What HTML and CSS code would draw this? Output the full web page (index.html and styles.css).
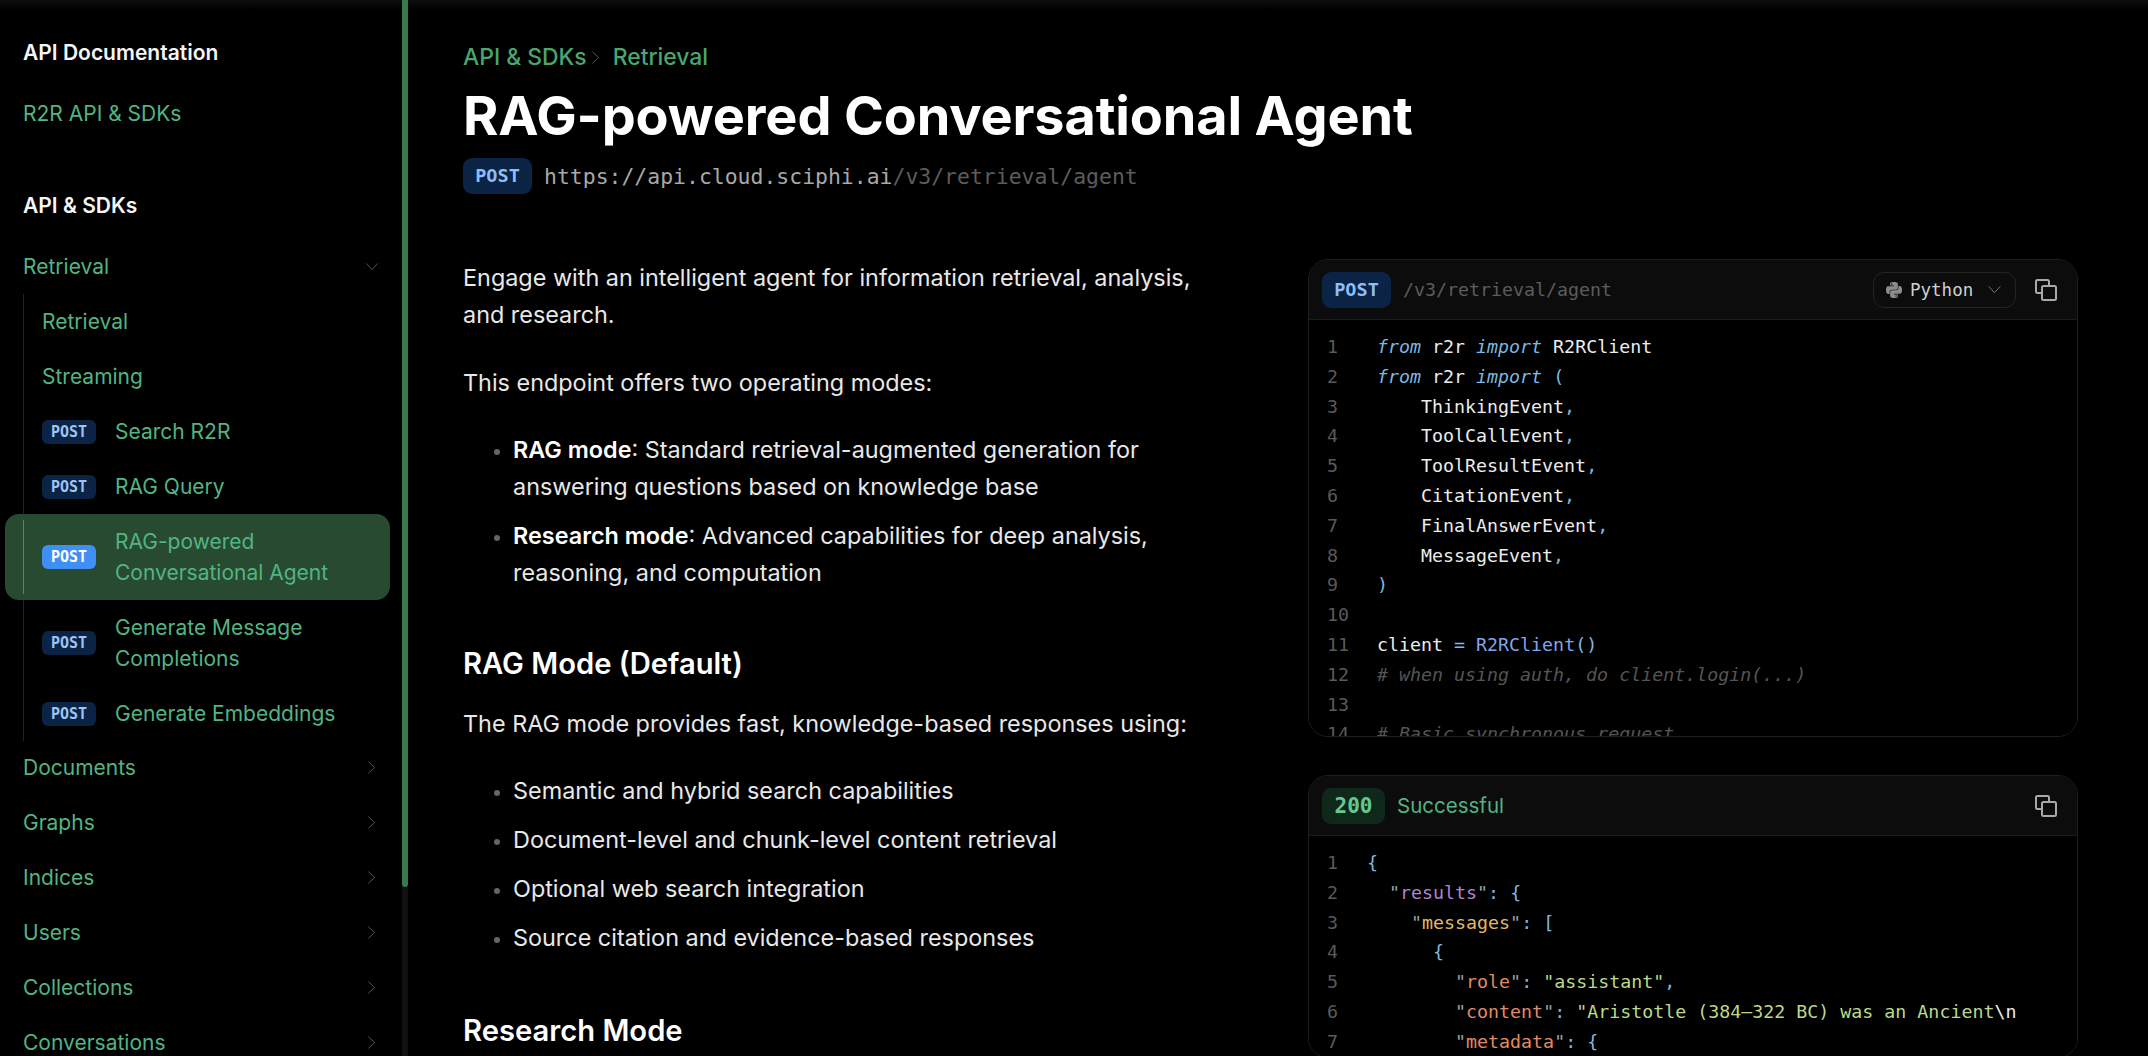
FILE: index.html
```html
<!DOCTYPE html>
<html lang="en">
  <head>
    <meta charset="UTF-8" />
    <title>RAG-powered Conversational Agent</title>
    <link rel="stylesheet" href="styles.css">
  </head>
  <body>
    <svg class="sprite" width="0" height="0">
      <symbol id="right" viewBox="0 0 10 16"><path d="M1.5 1.5 8.5 8l-7 6.5" /></symbol>
      <symbol id="down" viewBox="0 0 16 10"><path d="M1.5 1.5 8 8.5l6.500-7" /></symbol>
      <symbol id="copy" viewBox="0 0 24 24"><path d="M15 7V3.500A1.500 1.500 0 0 0 13.500 2h-10A1.500 1.500 0 0 0 2 3.500v10A1.500 1.500 0 0 0 3.500 15H7" /><rect x="8" y="8" width="14" height="14" rx="1.500" /></symbol>
    </svg>

    <aside class="sidebar">
      <h5 class="side-title">API Documentation</h5>
      <a class="side-link">R2R API &amp; SDKs</a>

      <h5 class="side-title second">API &amp; SDKs</h5>
      <a class="side-link">Retrieval <svg class="chev-down"><use href="#down" /></svg></a>
      <div class="nested">
        <a class="side-link">Retrieval</a>
        <a class="side-link">Streaming</a>
        <a class="side-link"><span class="badge">POST</span><span class="label">Search R2R</span></a>
        <a class="side-link"><span class="badge">POST</span><span class="label">RAG Query</span></a>
        <a class="side-link active"><span class="badge">POST</span><span class="label">RAG-powered Conversational Agent</span></a>
        <a class="side-link"><span class="badge">POST</span><span class="label">Generate Message Completions</span></a>
        <a class="side-link"><span class="badge">POST</span><span class="label">Generate Embeddings</span></a>
      </div>
      <a class="side-link">Documents <svg class="chev"><use href="#right" /></svg></a>
      <a class="side-link">Graphs <svg class="chev"><use href="#right" /></svg></a>
      <a class="side-link">Indices <svg class="chev"><use href="#right" /></svg></a>
      <a class="side-link">Users <svg class="chev"><use href="#right" /></svg></a>
      <a class="side-link">Collections <svg class="chev"><use href="#right" /></svg></a>
      <a class="side-link">Conversations <svg class="chev"><use href="#right" /></svg></a>
    </aside>
    <div class="scrollbar"><div class="thumb"></div></div>

    <main class="main">
      <div class="crumbs">
        <span>API &amp; SDKs</span>
        <svg class="crumb-sep"><use href="#right" /></svg>
        <span>Retrieval</span>
      </div>
      <h1>RAG-powered Conversational Agent</h1>
      <div class="endpoint">
        <span class="method">POST</span>
        <span class="url">https://api.cloud.sciphi.ai<span class="path">/v3/retrieval/agent</span></span>
      </div>

      <div class="columns">
        <div class="prose">
          <p>Engage with an intelligent agent for information retrieval, analysis, and research.</p>
          <p>This endpoint offers two operating modes:</p>
          <ul>
            <li><strong>RAG mode</strong>: Standard retrieval-augmented generation for answering questions based on knowledge base</li>
            <li><strong>Research mode</strong>: Advanced capabilities for deep analysis, reasoning, and computation</li>
          </ul>
          <h2>RAG Mode (Default)</h2>
          <p>The RAG mode provides fast, knowledge-based responses using:</p>
          <ul>
            <li>Semantic and hybrid search capabilities</li>
            <li>Document-level and chunk-level content retrieval</li>
            <li>Optional web search integration</li>
            <li>Source citation and evidence-based responses</li>
          </ul>
          <h2>Research Mode</h2>
        </div>

        <div class="panels">
          <section class="panel request">
            <header class="panel-head">
              <span class="method">POST</span>
              <span class="panel-path">/v3/retrieval/agent</span>
              <button class="lang">
                <svg class="py" viewBox="0 0 24 24"><path d="M14.250.180l.9.2.730.260.590.3.450.320.340.340.250.340.160.330.1.3.040.260.020.2-.010.130V8.500l-.050.630-.130.550-.210.460-.260.380-.3.310-.330.250-.350.190-.350.140-.330.1-.3.070-.260.040-.210.020H8.770l-.690.050-.590.140-.5.220-.410.270-.330.320-.270.350-.2.360-.150.370-.1.350-.070.320-.040.270-.020.210v3.060H3.170l-.210-.030-.280-.070-.320-.120-.350-.180-.360-.260-.360-.360-.350-.460-.320-.590-.280-.730-.210-.880-.140-1.050-.050-1.230.060-1.220.160-1.040.240-.870.320-.710.360-.570.4-.440.420-.330.420-.240.4-.160.360-.1.320-.050.240-.010h.160l.060.010h8.160v-.830H6.180l-.010-2.750-.020-.370.050-.340.110-.310.170-.280.250-.260.310-.230.380-.2.440-.180.510-.150.580-.120.640-.1.710-.060.770-.040.840-.020 1.270.050zm-6.300 1.980l-.230.330-.080.410.080.410.230.340.330.220.410.090.410-.090.330-.220.230-.340.080-.410-.080-.410-.230-.330-.330-.220-.410-.090-.410.090zm13.090 3.950l.280.060.320.120.350.180.360.270.360.350.350.470.320.590.280.730.210.880.140 1.040.050 1.230-.060 1.230-.160 1.040-.240.860-.320.710-.360.570-.4.450-.420.330-.420.240-.4.160-.360.090-.320.050-.240.020-.160-.010h-8.220v.820h5.840l.010 2.760.020.360-.050.340-.110.310-.170.290-.250.250-.310.240-.38.2-.44.170-.51.150-.58.130-.64.090-.71.070-.77.040-.84.010-1.270-.040-1.070-.14-.9-.2-.73-.25-.59-.3-.45-.33-.34-.34-.25-.34-.16-.33-.1-.3-.04-.25-.02-.2.010-.130v-5.340l.050-.640.130-.540.210-.460.260-.380.3-.320.330-.240.350-.2.350-.140.330-.1.3-.060.260-.040.210-.020.130-.010h5.840l.690-.050.590-.140.5-.210.410-.280.330-.320.270-.350.2-.360.150-.360.1-.350.070-.320.040-.280.020-.210V6.070h2.090l.140.010zm-6.470 14.250l-.230.330-.080.410.080.410.230.330.330.230.410.080.410-.080.330-.230.230-.330.080-.410-.080-.410-.230-.330-.330-.230-.410-.080-.410.080z" /></svg>
                Python
                <svg class="lang-chev"><use href="#down" /></svg>
              </button>
              <svg class="copy"><use href="#copy" /></svg>
            </header>
            <div class="code">
              <div class="line"><i>1</i><code><em>from</em> r2r <em>import</em> R2RClient</code></div>
              <div class="line"><i>2</i><code><em>from</em> r2r <em>import</em> <b>(</b></code></div>
              <div class="line"><i>3</i><code>    ThinkingEvent<b>,</b></code></div>
              <div class="line"><i>4</i><code>    ToolCallEvent<b>,</b></code></div>
              <div class="line"><i>5</i><code>    ToolResultEvent<b>,</b></code></div>
              <div class="line"><i>6</i><code>    CitationEvent<b>,</b></code></div>
              <div class="line"><i>7</i><code>    FinalAnswerEvent<b>,</b></code></div>
              <div class="line"><i>8</i><code>    MessageEvent<b>,</b></code></div>
              <div class="line"><i>9</i><code><b>)</b></code></div>
              <div class="line"><i>10</i><code></code></div>
              <div class="line"><i>11</i><code>client <b>=</b> <span class="fn">R2RClient</span><b>()</b></code></div>
              <div class="line"><i>12</i><code><span class="cm"># when using auth, do client.login(...)</span></code></div>
              <div class="line"><i>13</i><code></code></div>
              <div class="line"><i>14</i><code><span class="cm"># Basic synchronous request</span></code></div>
            </div>
          </section>

          <section class="panel response">
            <header class="panel-head">
              <span class="status">200</span>
              <span class="status-text">Successful</span>
              <svg class="copy"><use href="#copy" /></svg>
            </header>
            <div class="code json">
              <div class="line"><i>1</i><code><b>{</b></code></div>
              <div class="line"><i>2</i><code>  <s>"</s><span class="k1">results</span><s>"</s><b>:</b> <b>{</b></code></div>
              <div class="line"><i>3</i><code>    <s>"</s><span class="k2">messages</span><s>"</s><b>:</b> <b>[</b></code></div>
              <div class="line"><i>4</i><code>      <b>{</b></code></div>
              <div class="line"><i>5</i><code>        <s>"</s><span class="k3">role</span><s>"</s><b>:</b> <span class="str">"assistant"</span><b>,</b></code></div>
              <div class="line"><i>6</i><code>        <s>"</s><span class="k3">content</span><s>"</s><b>:</b> <span class="str">"Aristotle (384–322 BC) was an Ancient</span>\n</code></div>
              <div class="line"><i>7</i><code>        <s>"</s><span class="k3">metadata</span><s>"</s><b>:</b> <b>{</b></code></div>
            </div>
          </section>
        </div>
      </div>
    </main>
  </body>
</html>
```

FILE: styles.css
```css
* {
  box-sizing: border-box;
}
html,
body {
  height: 1056px;
  margin: 0;
  overflow: hidden;
}
body {
  display: flex;
  background: linear-gradient(to bottom, #0a0e0c, #000 10px);
  color: #f2f2f2;
  font-family: "Inter", sans-serif;
}
.sprite {
  position: absolute;
}
symbol path,
symbol rect {
  fill: none;
  stroke: currentColor;
}

/* sidebar */
.sidebar {
  width: 402px;
  flex: none;
  padding: 37px 12px 0 5px;
  font-size: 21px;
  line-height: 31px;
}
.side-title {
  margin: 0 0 18px 18px;
  font-size: 21px;
  font-weight: 600;
  line-height: 31px;
  color: #f5f5f5;
}
.side-title.second {
  margin-top: 49px;
  margin-bottom: 18px;
}
.side-link {
  display: flex;
  align-items: center;
  justify-content: space-between;
  padding: 12px 18px;
  color: #52b483;
  border-radius: 14px;
}
.nested {
  margin-left: 18px;
  margin-bottom: -1px;
  border-left: 1px solid #222;
}
.nested .side-link {
  justify-content: flex-start;
  margin-left: -19px;
  padding-left: 37px;
  gap: 19px;
}
.nested .active {
  position: relative;
  background: #274a31;
}
.nested .active::before {
  content: "";
  position: absolute;
  left: 18px;
  top: 6px;
  bottom: 6px;
  width: 1px;
  background: #4d8d63;
}
.badge {
  flex: none;
  width: 54px;
  height: 24px;
  border-radius: 6px;
  background: #0b2345;
  color: #9cc4f5;
  font-family: "DejaVu Sans Mono", monospace;
  font-size: 15px;
  font-weight: 700;
  line-height: 24px;
  text-align: center;
}
.active .badge {
  background: #3f8ff5;
  color: #fff;
}
.chev,
.chev-down {
  color: #5f5f5f;
}
.chev {
  width: 9px;
  height: 15px;
  margin-right: -4px;
}
.chev-down {
  width: 14px;
  height: 9px;
  margin-right: -7px;
}
.scrollbar {
  width: 6px;
  flex: none;
  background: #111;
}
.thumb {
  height: 887px;
  background: #367a50;
  border-radius: 0 0 3px 3px;
}

/* main column */
.main {
  flex: 1;
  min-width: 0;
  padding: 44px 70px 0 55px;
}
.crumbs {
  display: flex;
  align-items: center;
  gap: 8.500px;
  font-size: 22.900px;
  font-weight: 500;
  line-height: 26px;
  color: #4aa56e;
}
.crumb-sep {
  width: 9px;
  height: 15px;
  margin: 0 4px 0 -4px;
  color: #5a5a5a;
}
h1 {
  margin: 12px 0 0;
  font-size: 54px;
  font-weight: 700;
  line-height: 68px;
  letter-spacing: -0.150px;
  color: #fff;
}
.endpoint {
  display: flex;
  align-items: center;
  gap: 12px;
  margin-top: 8px;
}
.method {
  flex: none;
  width: 69px;
  height: 36px;
  border-radius: 9px;
  background: #0b2345;
  color: #8fbdf5;
  font-family: "DejaVu Sans Mono", monospace;
  font-size: 18.500px;
  font-weight: 700;
  line-height: 36px;
  text-align: center;
}
.url {
  font-family: "DejaVu Sans Mono", monospace;
  font-size: 21.450px;
  color: #a8a8a8;
}
.path {
  color: #5c5c5c;
}
.columns {
  display: grid;
  grid-template-columns: 1fr 770px;
  gap: 100px;
  margin-top: 65px;
}

/* prose */
.prose {
  font-size: 23.400px;
  line-height: 37.300px;
  color: #e8e8e8;
}
.prose p {
  margin: 0 0 30px;
}
.prose ul {
  margin: 0 0 30px;
  padding-left: 50px;
}
.prose li {
  margin-bottom: 11.500px;
}
.prose li::marker {
  color: #666;
  font-size: 19px;
}
.prose strong {
  font-weight: 600;
  color: #fff;
}
.prose h2 {
  margin: 53px 0 23px;
  font-size: 29.200px;
  font-weight: 600;
  line-height: 37.500px;
  color: #fff;
}
.prose h2:last-child {
  margin-top: 56px;
}

/* code panels */
.panels {
  display: flex;
  flex-direction: column;
  gap: 38px;
}
.panel {
  border: 1px solid #1e1e1e;
  border-radius: 20px;
  overflow: hidden;
}
.request {
  height: 478px;
}
.panel-head {
  display: flex;
  align-items: center;
  height: 60px;
  padding: 0 19px 0 13px;
  background: #0c0c0c;
  border-bottom: 1px solid #1c1c1c;
}
.panel-path {
  margin-left: 12px;
  font-family: "DejaVu Sans Mono", monospace;
  font-size: 18.300px;
  color: #5c5c5c;
}
.lang {
  display: flex;
  align-items: center;
  gap: 8px;
  width: 143px;
  height: 36px;
  margin-left: auto;
  padding: 0 12px;
  background: #0c0c0c;
  border: 1px solid #242424;
  border-radius: 11px;
  color: #d0d0d0;
  font-family: "DejaVu Sans Mono", monospace;
  font-size: 17.500px;
}
.py {
  width: 16px;
  height: 16px;
  fill: #8c8c8c;
}
.lang-chev {
  width: 15px;
  height: 9px;
  margin-left: 6px;
  color: #808080;
}
.copy {
  flex: none;
  width: 24px;
  height: 24px;
  margin-left: 18px;
  color: #a8a8a8;
  stroke-width: 2px;
}
.response .copy {
  margin-left: auto;
}
.status {
  width: 63px;
  height: 36px;
  border-radius: 9px;
  background: #10281c;
  color: #62c98f;
  font-family: "DejaVu Sans Mono", monospace;
  font-size: 21px;
  font-weight: 700;
  line-height: 36px;
  text-align: center;
}
.status-text {
  margin-left: 12px;
  font-size: 20.500px;
  color: #52b483;
}
.code {
  padding: 12px 0 0 18px;
  font-family: "DejaVu Sans Mono", monospace;
  font-size: 18.300px;
  line-height: 29.800px;
  background: #000;
}
.line {
  display: flex;
  height: 29.800px;
  white-space: pre;
}
.line i {
  width: 50px;
  flex: none;
  font-style: normal;
  color: #5a5a5a;
}
.json .line i {
  width: 40px;
}
.line code {
  font-family: inherit;
  color: #ececec;
}
.line em {
  color: #7db8e2;
}
.line b {
  font-weight: 400;
  color: #7db8e2;
}
.fn {
  color: #82a4ea;
}
.cm {
  color: #555;
  font-style: italic;
}
.line s {
  text-decoration: none;
  color: #9aa4a8;
}
.k1 {
  color: #b184d6;
}
.k2 {
  color: #e3b866;
}
.k3 {
  color: #e08a66;
}
.str {
  color: #bcd98a;
}
```
